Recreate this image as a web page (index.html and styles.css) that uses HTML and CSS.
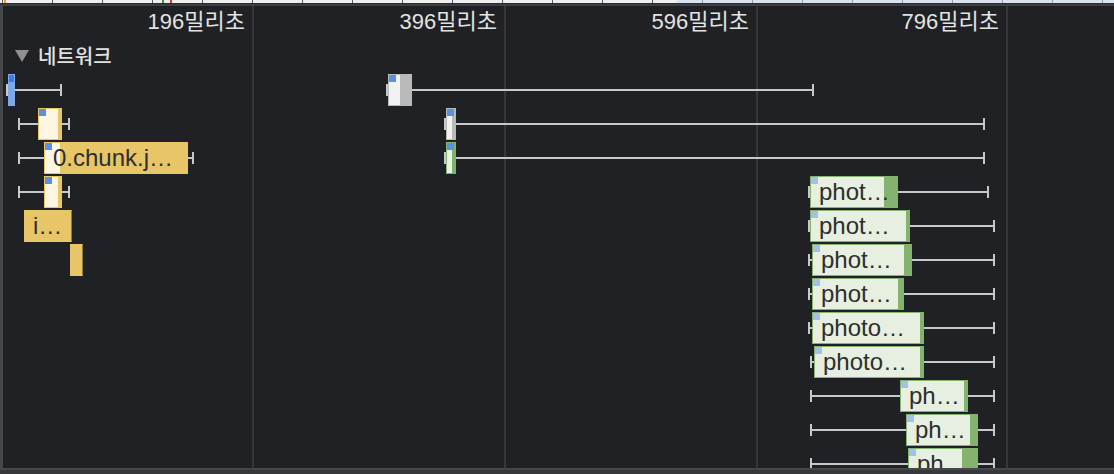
FILE: index.html
```html
<!DOCTYPE html>
<html lang="ko">
<head>
<meta charset="utf-8">
<title>네트워크</title>
<link rel="stylesheet" href="styles.css">
</head>
<body>
<div class="overview">
  <i class="ov-mark orange" style="left:4px"></i>
  <i class="ov-mark green" style="left:162px"></i>
  <i class="ov-mark red" style="left:170px"></i>
</div>
<div class="ov-border"></div>
<div class="main">
  <div class="edge"></div>
  <div class="track">
    <div class="grid">
      <div class="col c1"><span class="tlabel">196밀리초</span></div>
      <div class="col c2"><span class="tlabel">396밀리초</span></div>
      <div class="col c3"><span class="tlabel">596밀리초</span></div>
      <div class="col c4"><span class="tlabel">796밀리초</span></div>
      <div class="col c5"></div>
    </div>
    <div class="content">
      <div class="group"><span class="tri"></span><span>네트워크</span></div>
      <div class="rows">
        <div class="row">
          <div class="req" style="left:3px;width:56px"><span class="wl" style="width:2px"></span><span class="bar blue" style="width:7px;--l:0px"></span><span class="wr"></span></div>
          <div class="req" style="left:383px;width:428px"><span class="wl" style="width:2px"></span><span class="bar grey" style="width:24px;--l:11px"></span><span class="wr"></span></div>
        </div>
        <div class="row">
          <div class="req" style="left:15px;width:52px"><span class="wl" style="width:20px"></span><span class="bar yellow" style="width:24px;--l:19px"></span><span class="wr"></span></div>
          <div class="req" style="left:441px;width:541px"><span class="wl" style="width:2px"></span><span class="bar grey" style="width:10px;--l:5px"></span><span class="wr"></span></div>
        </div>
        <div class="row">
          <div class="req" style="left:15px;width:176px"><span class="wl" style="width:26px"></span><span class="bar yellow" style="width:144px;--l:15px">0.chunk.j…</span><span class="wr"></span></div>
          <div class="req" style="left:441px;width:541px"><span class="wl" style="width:2px"></span><span class="bar green" style="width:10px;--l:5px"></span><span class="wr"></span></div>
        </div>
        <div class="row">
          <div class="req" style="left:15px;width:52px"><span class="wl" style="width:26px"></span><span class="bar yellow" style="width:18px;--l:13px"></span><span class="wr"></span></div>
          <div class="req" style="left:805px;width:181px"><span class="wl" style="width:2px"></span><span class="bar photo" style="width:88px;--l:73px">phot…</span><span class="wr"></span></div>
        </div>
        <div class="row">
          <div class="req" style="left:21px;width:48px"><span class="bar yellow shade" style="width:48px;--l:0px">i…</span></div>
          <div class="req" style="left:805px;width:187px"><span class="wl" style="width:2px"></span><span class="bar photo" style="width:100px;--l:95px">phot…</span><span class="wr"></span></div>
        </div>
        <div class="row">
          <div class="req" style="left:67px;width:13px"><span class="bar yellow shade" style="width:13px;--l:0px"></span></div>
          <div class="req" style="left:805px;width:187px"><span class="wl" style="width:4px"></span><span class="bar photo" style="width:100px;--l:91px">phot…</span><span class="wr"></span></div>
        </div>
        <div class="row">
          <div class="req" style="left:805px;width:187px"><span class="wl" style="width:4px"></span><span class="bar photo" style="width:92px;--l:85px">phot…</span><span class="wr"></span></div>
        </div>
        <div class="row">
          <div class="req" style="left:805px;width:187px"><span class="wl" style="width:4px"></span><span class="bar photo" style="width:112px;--l:107px">photo…</span><span class="wr"></span></div>
        </div>
        <div class="row">
          <div class="req" style="left:807px;width:185px"><span class="wl" style="width:4px"></span><span class="bar photo" style="width:110px;--l:105px">photo…</span><span class="wr"></span></div>
        </div>
        <div class="row">
          <div class="req" style="left:807px;width:185px"><span class="wl" style="width:90px"></span><span class="bar photo" style="width:68px;--l:63px">ph…</span><span class="wr"></span></div>
        </div>
        <div class="row">
          <div class="req" style="left:807px;width:185px"><span class="wl" style="width:96px"></span><span class="bar photo" style="width:72px;--l:63px">ph…</span><span class="wr"></span></div>
        </div>
        <div class="row">
          <div class="req" style="left:807px;width:185px"><span class="wl" style="width:98px"></span><span class="bar photo" style="width:70px;--l:53px">ph…</span><span class="wr"></span></div>
        </div>
      </div>
    </div>
  </div>
</div>
<div class="footer"></div>
</body>
</html>
```
FILE: styles.css
```css
html, body {
  margin: 0;
  padding: 0;
}

body {
  width: 1114px;
  height: 474px;
  overflow: hidden;
  background: #202124;
  display: flex;
  flex-direction: column;
  font-family: "Liberation Sans", "Noto Sans CJK KR", sans-serif;
}

/* overview strip at the very top */
.overview {
  position: relative;
  flex: none;
  height: 3px;
  background:
    linear-gradient(to right, transparent 677px, rgba(200, 214, 238, 0.55) 677px),
    repeating-linear-gradient(to right, #5a5b5e 0 1px, #f0f0f0 1px 50px);
  background-position: 0 0, 2px 0;
}

.ov-mark {
  position: absolute;
  top: 0;
  width: 2px;
  height: 3px;
}

.ov-mark.orange { background: #f29d38; }
.ov-mark.green { background: #3d8f4a; }
.ov-mark.red { background: #d23a2f; }

.ov-border {
  flex: none;
  height: 3px;
  box-sizing: border-box;
  border-top: 1px solid #2a2b2e;
  background: #3e3f43;
}

.main {
  flex: 1;
  display: flex;
  min-height: 0;
}

.edge {
  flex: none;
  width: 3px;
  background: #46474b;
}

.track {
  flex: 1;
  position: relative;
  overflow: hidden;
}

/* time grid */
.grid {
  position: absolute;
  inset: 0;
  display: flex;
}

.col {
  flex: none;
  box-sizing: border-box;
  border-right: 2px solid #36373b;
  text-align: right;
  padding-right: 7px;
  font-size: 22px;
  line-height: 32px;
  color: #e3e3e3;
  white-space: nowrap;
}

.c1 { width: 251px; }
.c2, .c3 { width: 252px; }
.c4 { width: 250px; }
.c5 { flex: 1; border-right: none; }

.content {
  position: relative;
  padding-top: 32px;
}

.group {
  height: 35px;
  display: flex;
  align-items: center;
  gap: 9px;
  padding-left: 12px;
  font-family: "Noto Sans CJK KR", sans-serif;
  font-size: 20px;
  font-weight: 500;
  color: #e2e2e2;
}

.tri {
  width: 0;
  height: 0;
  margin-top: 1px;
  border-left: 7px solid transparent;
  border-right: 7px solid transparent;
  border-top: 12px solid #8f8f8f;
}

/* network rows */
.row {
  position: relative;
  height: 34px;
}

.req {
  position: absolute;
  top: 1px;
  height: 32px;
  display: flex;
}

.wl, .wr {
  height: 32px;
  --w: #c8c8c8;
}

.wl {
  flex: none;
  background:
    linear-gradient(var(--w), var(--w)) 0 10px / 2px 12px no-repeat,
    linear-gradient(var(--w), var(--w)) 0 15px / 100% 2px no-repeat;
}

.wr {
  flex: 1;
  background:
    linear-gradient(var(--w), var(--w)) 100% 10px / 2px 12px no-repeat,
    linear-gradient(var(--w), var(--w)) 0 15px / 100% 2px no-repeat;
}

.bar {
  flex: none;
  box-sizing: border-box;
  height: 32px;
  border: 1px solid var(--s);
  background:
    linear-gradient(var(--p), var(--p)) 0 0 / 7px 7px no-repeat,
    linear-gradient(to right, var(--lt) var(--l), var(--s) 0);
  padding-left: 8px;
  font-size: 24px;
  line-height: 30px;
  color: #2e2e2e;
  white-space: nowrap;
  overflow: hidden;
}

.bar.blue {
  --s: #7ea8e8;
  --lt: #7ea8e8;
  --p: #3b7be8;
  padding-left: 0;
}

.bar.grey {
  --s: #b9b9b9;
  --lt: #f2f2f2;
  --p: #5b8fe6;
}

.bar.yellow {
  --s: #e8c566;
  --lt: #fdf6e3;
  --p: #5b8fe6;
}

.bar.green {
  --s: #80b36b;
  --lt: #e9f3e2;
  --p: #5b8fe6;
}

.bar.photo {
  --s: #84b26f;
  --lt: #e6efe0;
  --p: #a3c1e6;
}

.bar.shade {
  --p: transparent;
  border-right-color: #8e7a43;
}

.footer {
  flex: none;
  height: 6px;
  box-sizing: border-box;
  border-top: 2px solid #47484c;
  background: #36373b;
}
```
